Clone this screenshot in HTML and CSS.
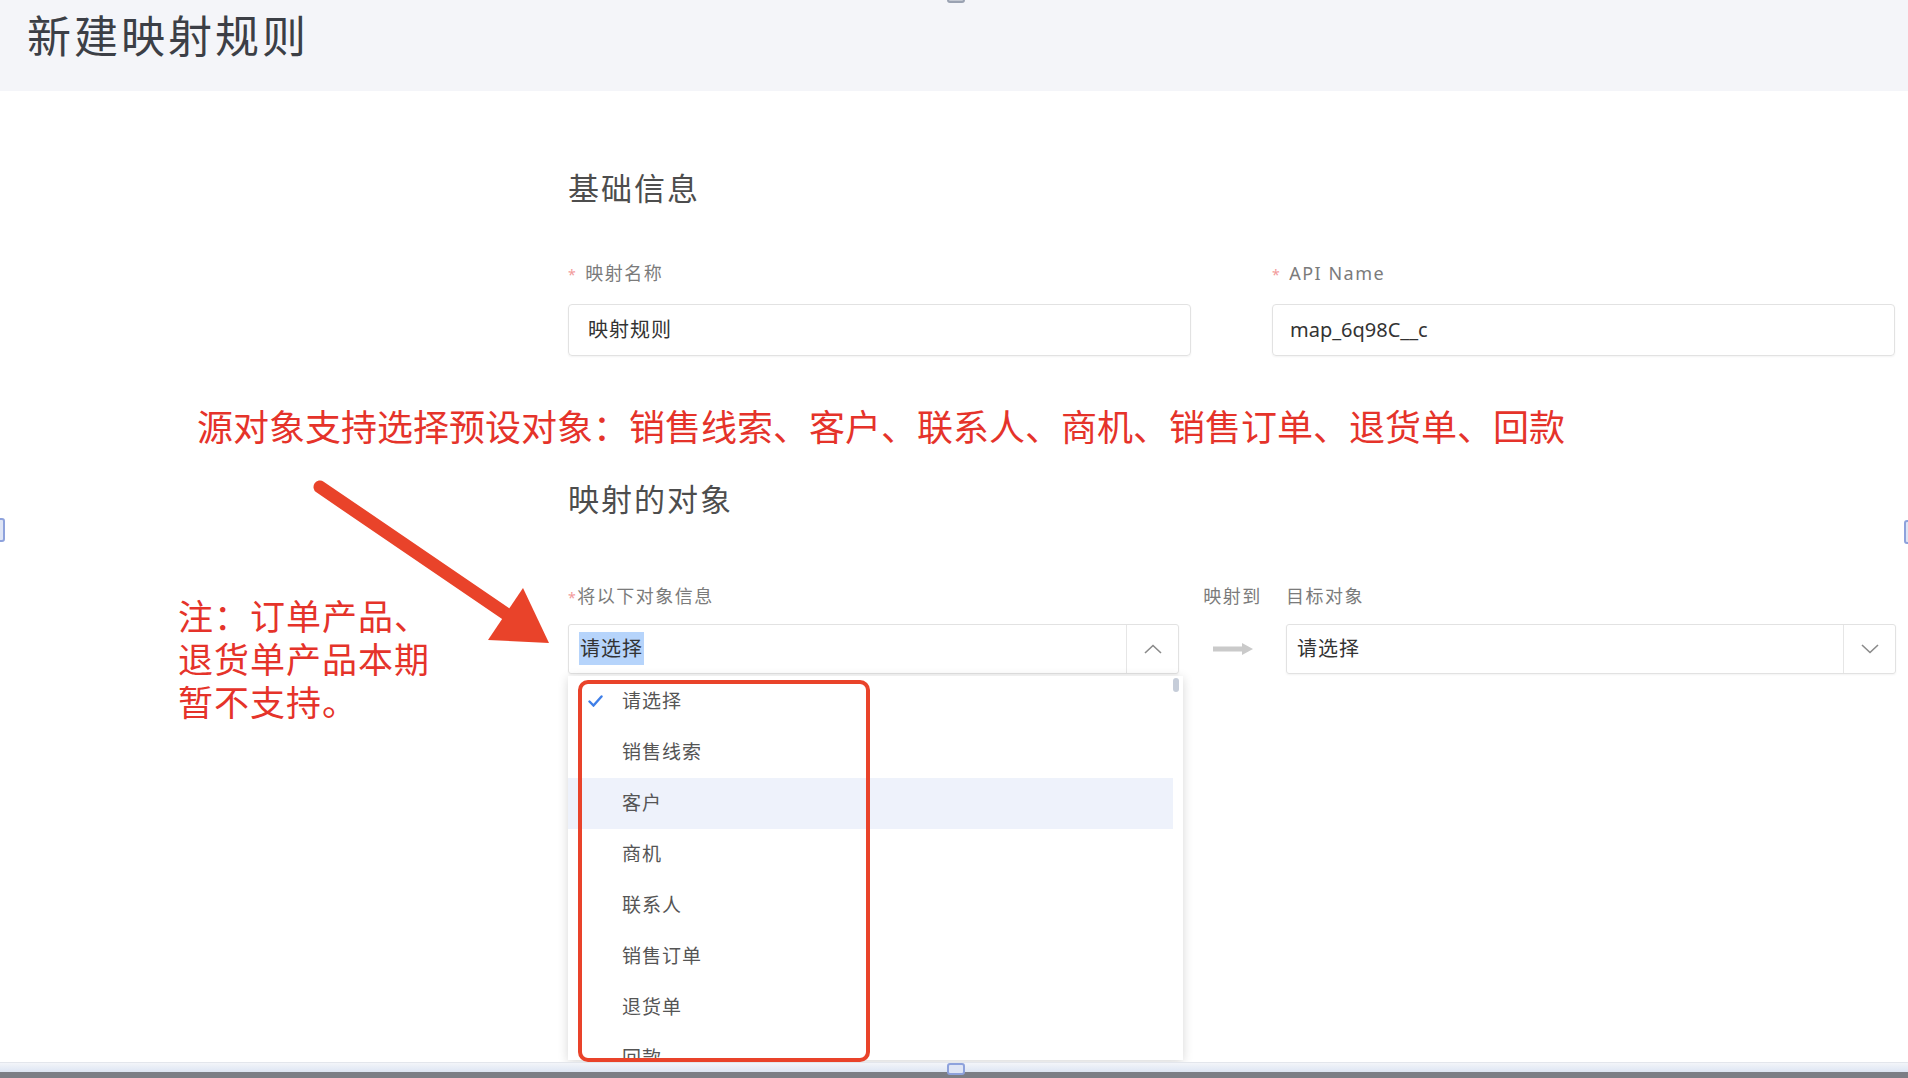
FILE: index.html
```html
<!DOCTYPE html>
<html lang="zh-CN">
<head>
    <meta charset="UTF-8">
    <meta name="viewport" content="width=device-width, initial-scale=1.0">
    <title>新建映射规则</title>
    <link rel="stylesheet" href="styles.css">
</head>
<body>
    <div class="page-header">
        <h1 class="page-title">新建映射规则</h1>
    </div>

    <div class="content">
        <h2 class="section-title first">基础信息</h2>
        <div class="field-grid">
            <div class="field">
                <div class="field-label"><span class="required gap">*</span>映射名称</div>
                <div class="text-input">映射规则</div>
            </div>
            <div class="field">
                <div class="field-label"><span class="required gap">*</span>API Name</div>
                <div class="text-input latin">map_6q98C__c</div>
            </div>
        </div>

        <h2 class="section-title second">映射的对象</h2>
        <div class="map-grid">
            <div class="field-label"><span class="required">*</span>将以下对象信息</div>
            <div class="field-label mid">映射到</div>
            <div class="field-label">目标对象</div>

            <div class="select open">
                <div class="select-value"><span class="text-selected">请选择</span></div>
                <div class="select-toggle">
                    <svg width="18" height="10" viewBox="0 0 18 10"><path d="M1 9 L9 1.5 L17 9" fill="none" stroke="#8a8a8a" stroke-width="1.6"/></svg>
                </div>
                <div class="dropdown">
                    <div class="scroll-thumb"></div>
                    <ul class="option-list">
                        <li class="option checked">
                            <svg class="check" width="15" height="12" viewBox="0 0 15 12"><path d="M1.5 6.5 L5.5 10.5 L13.5 1.5" fill="none" stroke="#3f7fe8" stroke-width="2.4" stroke-linecap="round"/></svg>
                            请选择
                        </li>
                        <li class="option">销售线索</li>
                        <li class="option hover">客户</li>
                        <li class="option">商机</li>
                        <li class="option">联系人</li>
                        <li class="option">销售订单</li>
                        <li class="option">退货单</li>
                        <li class="option">回款</li>
                    </ul>
                </div>
            </div>
            <div class="map-arrow">
                <svg width="40" height="14" viewBox="0 0 40 14"><path d="M0 4.5 H29 V1 L40 7 L29 13 V9.5 H0 Z" fill="#cacaca"/></svg>
            </div>
            <div class="select">
                <div class="select-value">请选择</div>
                <div class="select-toggle">
                    <svg width="18" height="10" viewBox="0 0 18 10"><path d="M1 1 L9 8.5 L17 1" fill="none" stroke="#8a8a8a" stroke-width="1.6"/></svg>
                </div>
            </div>
        </div>
    </div>

    <!-- annotations drawn over the screenshot -->
    <div class="note-line">源对象支持选择预设对象：销售线索、客户、联系人、商机、销售订单、退货单、回款</div>
    <div class="note-block">注：订单产品、<br>退货单产品本期<br>暂不支持。</div>
    <svg class="note-arrow" width="270" height="190" viewBox="0 0 270 190">
        <line x1="20" y1="17" x2="212" y2="148" stroke="#e9432a" stroke-width="13" stroke-linecap="round"/>
        <polygon points="223,118 249,173 188,170" fill="#e9432a"/>
    </svg>
    <div class="red-box"></div>

    <!-- capture frame -->
    <div class="frame-line"></div>
    <div class="frame-bar"></div>
    <div class="handle handle-top"></div>
    <div class="handle handle-bottom"></div>
    <div class="handle handle-left"></div>
    <div class="handle handle-right"></div>
</body>
</html>
```

FILE: styles.css
```css
* {
    box-sizing: border-box;
}
html, body {
    margin: 0;
}
body {
    position: relative;
    width: 1908px;
    height: 1078px;
    overflow: hidden;
    background-color: #fff;
    font-family: "Noto Sans", "Noto Sans CJK SC", sans-serif;
    color: #333;
}
.page-header {
    height: 91px;
    background-color: #f4f5f9;
    padding: 8px 0 0 27px;
}
.page-title {
    margin: 0;
    font-size: 44px;
    font-weight: 400;
    line-height: 56px;
    letter-spacing: 3px;
    color: #3c3f46;
}
.content {
    padding: 0 12px 0 568px;
}
.section-title {
    margin: 0;
    font-size: 31px;
    font-weight: 400;
    line-height: 40px;
    letter-spacing: 2px;
    color: #4d4d4d;
}
.section-title.first {
    margin-top: 77px;
}
.section-title.second {
    margin-top: 123px;
}
.field-grid {
    display: grid;
    grid-template-columns: 623px 623px;
    column-gap: 81px;
    margin-top: 53px;
}
.field-label {
    font-size: 18px;
    line-height: 24px;
    letter-spacing: 1.5px;
    color: #7b7b7b;
    white-space: nowrap;
}
.field-label.mid {
    text-align: center;
}
.required {
    color: #f29a9a;
    font-size: 14px;
}
.required.gap {
    margin-right: 8px;
}
.text-input {
    margin-top: 17px;
    height: 52px;
    border: 1px solid #e2e2e2;
    border-radius: 4px;
    padding-left: 19px;
    font-size: 20px;
    line-height: 50px;
    letter-spacing: 1px;
    color: #333;
    box-shadow: 0 1px 2px rgba(0, 0, 0, 0.05);
}
.text-input.latin {
    padding-left: 17px;
    letter-spacing: 0;
}
.map-grid {
    display: grid;
    grid-template-columns: 611px 107px 610px;
    row-gap: 14px;
    margin-top: 65px;
}
.select {
    position: relative;
    display: flex;
    height: 50px;
    border: 1px solid #e2e2e2;
    border-radius: 3px;
    box-shadow: 0 1px 2px rgba(0, 0, 0, 0.05);
}
.select-value {
    flex: 1;
    padding-left: 10px;
    font-size: 20px;
    line-height: 48px;
    letter-spacing: 1px;
    color: #333;
}
.text-selected {
    background-color: #b6d4fb;
    padding: 3px 1px;
}
.select-toggle {
    width: 52px;
    border-left: 1px solid #e6e6e6;
    display: flex;
    align-items: center;
    justify-content: center;
}
.map-arrow {
    display: flex;
    align-items: center;
    justify-content: center;
}
.dropdown {
    position: absolute;
    top: 51px;
    left: -1px;
    width: 615px;
    height: 384px;
    overflow: hidden;
    background-color: #fff;
    box-shadow: 0 2px 10px rgba(0, 0, 0, 0.16);
    z-index: 2;
}
.scroll-thumb {
    position: absolute;
    top: 2px;
    right: 4px;
    width: 6px;
    height: 14px;
    border-radius: 3px;
    background-color: #c6cdd9;
}
.option-list {
    list-style: none;
    margin: 0;
    padding: 0;
    width: 605px;
}
.option {
    position: relative;
    height: 51px;
    padding-left: 54px;
    font-size: 19px;
    line-height: 51px;
    letter-spacing: 1px;
    color: #555;
}
.option.hover {
    background-color: #eef2fb;
}
.check {
    position: absolute;
    left: 20px;
    top: 19px;
}
.note-line {
    position: absolute;
    left: 197px;
    top: 406px;
    font-size: 36px;
    line-height: 44px;
    color: #e5332a;
    white-space: nowrap;
}
.note-block {
    position: absolute;
    left: 178px;
    top: 595px;
    font-size: 35px;
    line-height: 43px;
    letter-spacing: 1px;
    color: #e5332a;
}
.note-arrow {
    position: absolute;
    left: 300px;
    top: 470px;
}
.red-box {
    position: absolute;
    left: 578px;
    top: 680px;
    width: 292px;
    height: 382px;
    border: 4px solid #e9432a;
    border-radius: 10px;
    z-index: 3;
}
.frame-line {
    position: absolute;
    left: 0;
    right: 0;
    top: 1062px;
    height: 10px;
    border-top: 1px solid #e3e6ec;
    background: linear-gradient(#f3f5f9, #dde5f3);
    z-index: 4;
}
.frame-bar {
    position: absolute;
    left: 0;
    right: 0;
    bottom: 0;
    height: 6px;
    background-color: #7b7e85;
    z-index: 4;
}
.handle {
    position: absolute;
    border: 2px solid #8ea2dc;
    background-color: #dfe5f5;
    border-radius: 3px;
    z-index: 5;
}
.handle-top {
    left: 947px;
    top: -8px;
    width: 18px;
    height: 11px;
    border-color: #9aa2b2;
    background-color: #c3c8d2;
}
.handle-bottom {
    left: 947px;
    top: 1063px;
    width: 18px;
    height: 12px;
}
.handle-left {
    left: -6px;
    top: 518px;
    width: 11px;
    height: 24px;
}
.handle-right {
    left: 1904px;
    top: 520px;
    width: 11px;
    height: 24px;
}
```
